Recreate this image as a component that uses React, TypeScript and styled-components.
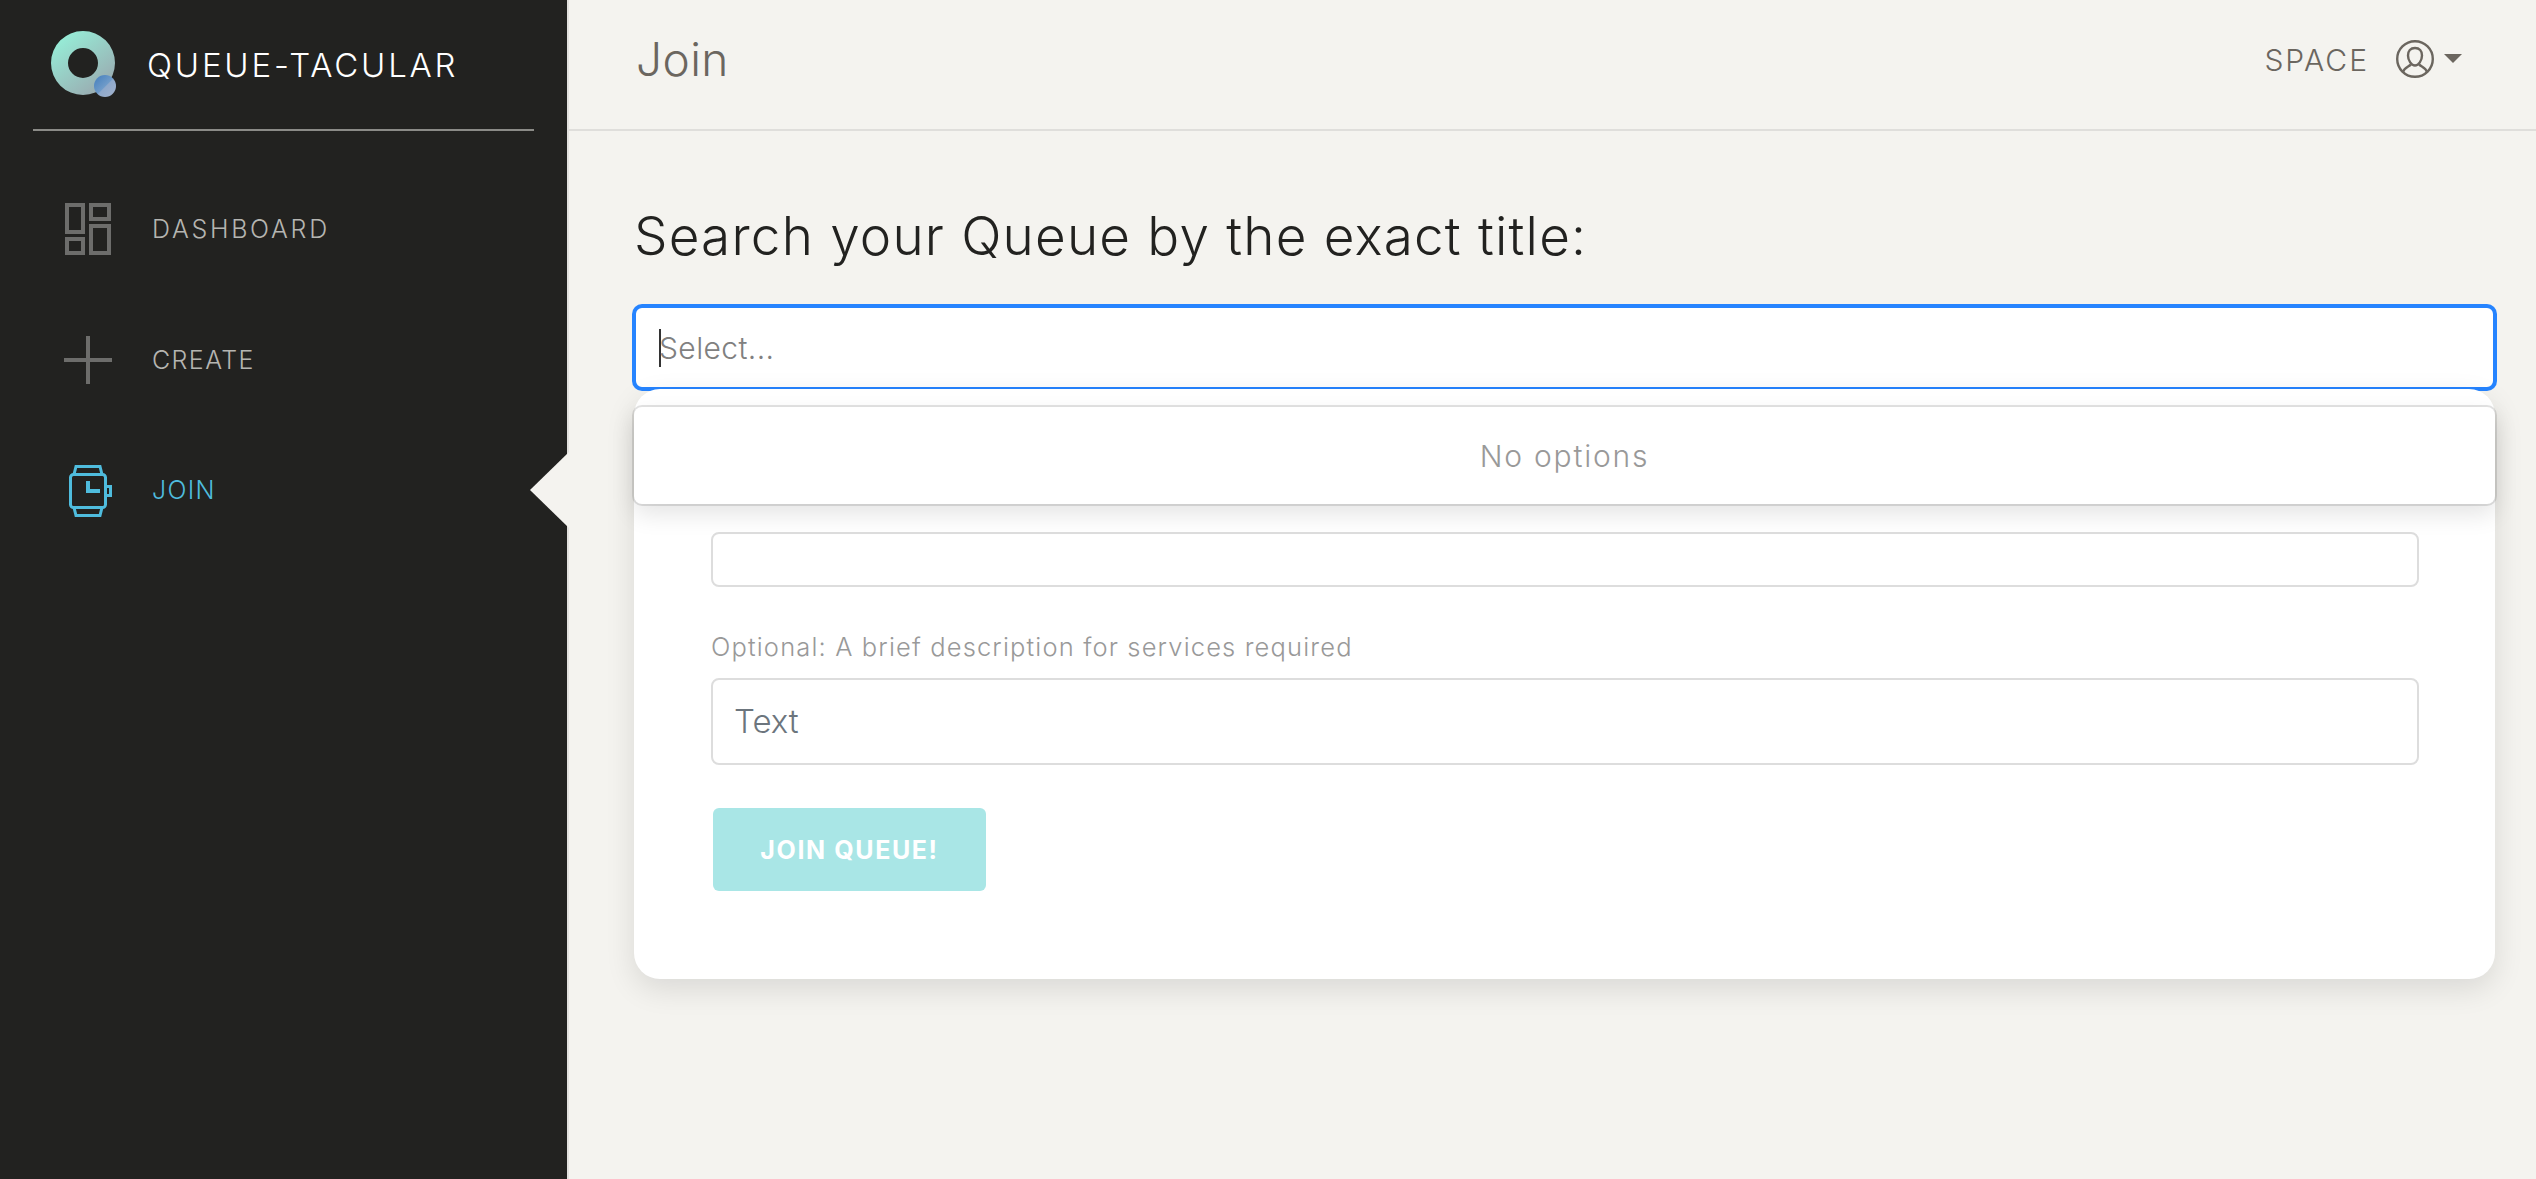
import styled, { createGlobalStyle } from "styled-components";

const GlobalStyle = createGlobalStyle`
    html, body {
        margin: 0;
        padding: 0;
        height: 100%;
        overflow: hidden;
        background-color: #f4f3ef;
        font-family: "Inter", "Liberation Sans", sans-serif;
        font-weight: 300;
    }
    * {
        box-sizing: border-box;
    }
`;

const Page = styled.div`
    display: flex;
    width: 2536px;
    height: 1179px;
`;

const Sidebar = styled.aside`
    width: 569px;
    flex-shrink: 0;
    background-color: #222220;
    border-right: 2px solid #e2e1de;
`;

const Brand = styled.div`
    height: 131px;
    margin: 0 33px;
    padding: 0 0 1px 18px;
    display: flex;
    align-items: center;
    gap: 30px;
    border-bottom: 2px solid #8b8b87;
`;

const BrandName = styled.span`
    color: #ffffff;
    font-size: 33px;
    letter-spacing: 2.8px;
    line-height: 40px;
    padding-top: 2px;
`;

const Nav = styled.nav`
    display: flex;
    flex-direction: column;
    padding-top: 33px;
`;

const NavItem = styled.a<{ $active?: boolean }>`
    position: relative;
    height: 130.5px;
    padding-left: 64px;
    display: flex;
    align-items: center;
    gap: 40px;
    color: ${(props) => (props.$active ? "#4fbcdd" : "#b5b5b1")};
    font-size: 25px;
    ${(props) =>
        props.$active &&
        `&::after {
            content: "";
            position: absolute;
            right: -2px;
            top: 50%;
            margin-top: -38px;
            border-style: solid;
            border-width: 38px 39px 38px 0;
            border-color: transparent #f4f3ef transparent transparent;
        }`}
`;

const NavLabel = styled.span<{ $tracking: number }>`
    letter-spacing: ${(props) => props.$tracking}px;
`;

const NavIcon = styled.svg`
    width: 48px;
    height: 54px;
    flex-shrink: 0;
    fill: none;
    stroke-width: 4;
`;

const Main = styled.main`
    flex: 1;
    min-width: 0;
`;

const TopBar = styled.header`
    height: 131px;
    padding: 0 74px 11px 67px;
    display: flex;
    align-items: center;
    justify-content: space-between;
    border-bottom: 2px solid #dfdedb;
`;

const PageTitle = styled.h1`
    margin: 0;
    color: #6b665f;
    font-size: 46px;
    font-weight: 300;
    letter-spacing: 0.4px;
    line-height: 60px;
`;

const Account = styled.div`
    display: flex;
    align-items: center;
    color: #6b665f;
    font-size: 30px;
    font-weight: 300;
    letter-spacing: 2px;
`;

const AccountName = styled.span`
    padding-top: 2px;
`;

const UserIcon = styled.svg`
    width: 38px;
    height: 38px;
    margin-left: 27px;
    fill: none;
    stroke: #6b665f;
    stroke-width: 2.4;
`;

const Caret = styled.span`
    width: 0;
    height: 0;
    margin-left: 10px;
    margin-top: -2px;
    border-style: solid;
    border-width: 9px 9px 0 9px;
    border-color: #6b665f transparent transparent transparent;
`;

const Content = styled.section`
    padding: 69px 41px 0 65px;
`;

const Heading = styled.h2`
    margin: 0 0 34px;
    color: #222220;
    font-size: 53px;
    font-weight: 300;
    letter-spacing: 1.2px;
    line-height: 72px;
`;

const SelectWrap = styled.div`
    position: relative;
`;

const SelectControl = styled.div`
    height: 83px;
    padding-left: 23px;
    display: flex;
    align-items: center;
    background-color: #ffffff;
    border: 2px solid #2684ff;
    border-radius: 8px;
    box-shadow: 0 0 0 2px #2684ff;
`;

const TextCaret = styled.span`
    width: 2px;
    height: 38px;
    margin-right: -2px;
    background-color: #333333;
`;

const Placeholder = styled.span`
    color: #808080;
    font-size: 30px;
    letter-spacing: 0.4px;
`;

const Menu = styled.div`
    position: absolute;
    top: 101px;
    left: 0;
    right: 0;
    z-index: 2;
    height: 97px;
    display: flex;
    align-items: center;
    justify-content: center;
    background-color: #ffffff;
    border-radius: 8px;
    box-shadow: 0 0 0 2px rgba(0, 0, 0, 0.11), 0 10px 24px rgba(0, 0, 0, 0.11);
    color: #999999;
    font-size: 30px;
    letter-spacing: 1.8px;
`;

const Card = styled.form`
    padding: 143px 76px 88px 77px;
    background-color: #ffffff;
    border-radius: 26px;
    box-shadow: 0 10px 30px rgba(0, 0, 0, 0.11);
`;

const Field = styled.div`
    display: flex;
    flex-direction: column;
    & + & {
        margin-top: 44px;
    }
`;

const Label = styled.label`
    margin-bottom: 15px;
    color: #999999;
    font-size: 25.5px;
    letter-spacing: 1.15px;
    line-height: 32px;
`;

const Input = styled.input<{ $tall?: boolean }>`
    width: 100%;
    height: ${(props) => (props.$tall ? "87px" : "55px")};
    padding: 0 21px 2px;
    background-color: #ffffff;
    border: 2px solid #dddddd;
    border-radius: 8px;
    font-family: inherit;
    font-size: 33px;
    font-weight: 300;
    outline: none;
    &::placeholder {
        color: #6c757d;
        opacity: 1;
    }
`;

const SubmitButton = styled.button`
    display: block;
    width: 273px;
    height: 83px;
    margin: 43px 0 0 2px;
    padding: 0;
    background-color: #a9e6e6;
    border: none;
    border-radius: 6px;
    color: #ffffff;
    font-family: inherit;
    font-size: 25px;
    font-weight: 700;
    letter-spacing: 1.6px;
`;

function Logo() {
    return (
        <svg width="66" height="66" viewBox="0 0 66 66">
            <defs>
                <linearGradient id="ring" x1="0.15" y1="0.05" x2="0.85" y2="0.95">
                    <stop offset="0" stopColor="#96efd8" />
                    <stop offset="1" stopColor="#9aa8af" />
                </linearGradient>
                <linearGradient id="dot" x1="0.15" y1="0.15" x2="0.85" y2="0.85">
                    <stop offset="0" stopColor="#4f86c0" />
                    <stop offset="0.5" stopColor="#6f9bc9" />
                    <stop offset="0.55" stopColor="#8fa9cb" />
                    <stop offset="1" stopColor="#9db0cc" />
                </linearGradient>
            </defs>
            <path
                fill="url(#ring)"
                fillRule="evenodd"
                d="M32 0a32 32 0 1 0 0 64a32 32 0 1 0 0-64zM32 17a15 15 0 1 1 0 30a15 15 0 1 1 0-30z"
            />
            <circle cx="54" cy="55" r="11" fill="url(#dot)" />
        </svg>
    );
}

function DashboardIcon() {
    return (
        <NavIcon viewBox="0 -1 48 54" stroke="#6d6d6b">
            <rect x="3" y="2" width="16" height="27" />
            <rect x="27" y="2" width="18" height="14" />
            <rect x="3" y="36" width="16" height="14" />
            <rect x="27" y="23" width="18" height="27" />
        </NavIcon>
    );
}

function PlusIcon() {
    return (
        <NavIcon viewBox="0 -1 48 54" stroke="#6d6d6b">
            <path d="M0 26H48M24 2V50" />
        </NavIcon>
    );
}

function WatchIcon() {
    return (
        <NavIcon viewBox="0 -1 48 54" stroke="#4fbcdd">
            <rect x="6.5" y="10.5" width="35" height="33" rx="3" strokeWidth="3" />
            <path strokeWidth="3" d="M10 10.5L12 2.5H36L38 10.5M10 43.5L12 51.5H36L38 43.5M41.5 22.5H46.5V31.5H41.5" />
            <path d="M24 17V27H36" />
        </NavIcon>
    );
}

function App() {
    return (
        <Page>
            <GlobalStyle />
            <Sidebar>
                <Brand>
                    <Logo />
                    <BrandName>QUEUE-TACULAR</BrandName>
                </Brand>
                <Nav>
                    <NavItem>
                        <DashboardIcon />
                        <NavLabel $tracking={2.7}>DASHBOARD</NavLabel>
                    </NavItem>
                    <NavItem>
                        <PlusIcon />
                        <NavLabel $tracking={1.4}>CREATE</NavLabel>
                    </NavItem>
                    <NavItem $active>
                        <WatchIcon />
                        <NavLabel $tracking={1.3}>JOIN</NavLabel>
                    </NavItem>
                </Nav>
            </Sidebar>
            <Main>
                <TopBar>
                    <PageTitle>Join</PageTitle>
                    <Account>
                        <AccountName>SPACE</AccountName>
                        <UserIcon viewBox="0 0 38 38">
                            <circle cx="19" cy="19" r="17.8" />
                            <path d="M19 8c-4.500 0-7 3-7 7.500c0 5 3.500 10 7 10s7-5 7-10C26 11 23.500 8 19 8z" />
                            <path d="M7 32C8 28 12 27 15 24.500M31 32C30 28 26 27 23 24.500" />
                        </UserIcon>
                        <Caret />
                    </Account>
                </TopBar>
                <Content>
                    <Heading>Search your Queue by the exact title:</Heading>
                    <SelectWrap>
                        <SelectControl>
                            <TextCaret />
                            <Placeholder>Select...</Placeholder>
                        </SelectControl>
                        <Menu>No options</Menu>
                        <Card>
                            <Field>
                                <Input />
                            </Field>
                            <Field>
                                <Label>Optional: A brief description for services required</Label>
                                <Input $tall placeholder="Text" />
                            </Field>
                            <SubmitButton type="button">JOIN QUEUE!</SubmitButton>
                        </Card>
                    </SelectWrap>
                </Content>
            </Main>
        </Page>
    );
}

export default App;
